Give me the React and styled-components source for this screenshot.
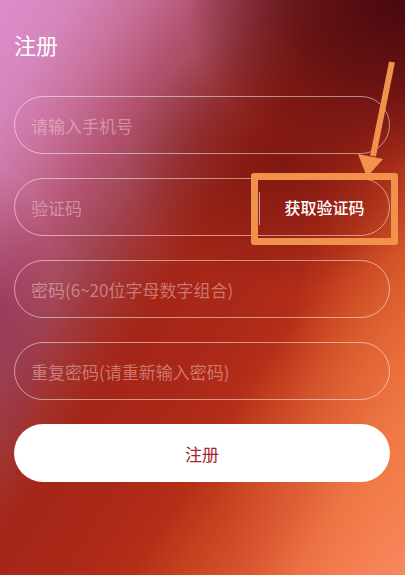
import React from "react";
import styled, { createGlobalStyle } from "styled-components";

const Global = createGlobalStyle`
  html, body { margin: 0; padding: 0; }
  body { font-family: "Noto Sans CJK SC", "Noto Sans", sans-serif; }
  * { box-sizing: border-box; }
`;

const Page = styled.div`
  position: relative;
  width: 405px;
  height: 575px;
  overflow: hidden;
  padding: 28px 15px 0 14px;
  background:
    radial-gradient(ellipse 220px 170px at 405px 0px, rgba(72,8,14,1) 0%, rgba(80,10,16,0.7) 50%, rgba(90,12,16,0) 100%),
    radial-gradient(ellipse 160px 130px at 285px 160px, rgba(100,14,12,0.6) 0%, rgba(100,14,12,0) 100%),
    radial-gradient(ellipse 55px 140px at 0px 310px, rgba(130,30,70,0.45) 0%, rgba(130,30,70,0) 100%),
    radial-gradient(ellipse 130px 250px at 420px 360px, rgba(240,122,60,0.5) 0%, rgba(240,122,60,0) 100%),
    radial-gradient(ellipse 200px 200px at 420px 470px, rgba(244,130,80,0.5) 0%, rgba(244,130,80,0) 100%),
    linear-gradient(123deg,
      #de8ccb 0px, #d686bc 60px, #c8709a 115px, #b25270 170px, #a44858 205px,
      #a03a40 235px, #a2302a 262px, #a42618 295px, #aa2818 360px, #b42e18 420px,
      #c84420 470px, #d85630 520px, #ea6e40 560px, #f47c52 600px, #fa8c68 653px);
`;

const Title = styled.h1`
  margin: 0 0 35px;
  font-size: 22px;
  font-weight: 400;
  line-height: 33px;
  color: #ffffff;
`;

const Form = styled.div`
  display: flex;
  flex-direction: column;
  gap: 24px;
`;

const Field = styled.div`
  position: relative;
  display: flex;
  align-items: center;
  height: 58px;
  border: 1px solid rgba(255, 255, 255, 0.5);
  border-radius: 29px;
`;

const Input = styled.input`
  flex: 1;
  min-width: 0;
  height: 100%;
  padding: 0 0 0 16px;
  border: none;
  outline: none;
  background: transparent;
  font-family: inherit;
  font-size: 17px;
  color: #fff;
  &::placeholder {
    color: rgba(255, 218, 218, 0.45);
  }
`;

const Divider = styled.span`
  width: 1px;
  height: 33px;
  margin-top: 2px;
  background: rgba(255, 255, 255, 0.6);
`;

const CodeButton = styled.button`
  width: 129px;
  height: 100%;
  border: none;
  background: transparent;
  font-family: inherit;
  font-size: 16px;
  font-weight: 500;
  color: #fff;
  padding: 0;
`;

const Submit = styled.button`
  height: 58px;
  border: none;
  border-radius: 29px;
  background: #fff;
  font-family: inherit;
  font-size: 17px;
  color: #a3262c;
`;

const Highlight = styled.div`
  position: absolute;
  left: 236px;
  top: -6px;
  width: 147px;
  height: 72px;
  border: 7px solid #f0924c;
  border-radius: 3px;
  pointer-events: none;
`;

const Arrow = styled.svg`
  position: absolute;
  left: 0;
  top: 0;
  pointer-events: none;
`;

export default function App() {
  return (
    <>
      <Global />
      <Page>
        <Title>注册</Title>
        <Form>
          <Field>
            <Input placeholder="请输入手机号" />
          </Field>
          <Field>
            <Input placeholder="验证码" />
            <Divider />
            <CodeButton>获取验证码</CodeButton>
            <Highlight />
          </Field>
          <Field>
            <Input placeholder="密码(6~20位字母数字组合)" />
          </Field>
          <Field>
            <Input placeholder="重复密码(请重新输入密码)" />
          </Field>
          <Submit>注册</Submit>
        </Form>
        <Arrow width="405" height="575" viewBox="0 0 405 575">
          <line x1="392" y1="62" x2="373" y2="156" stroke="#f0924c" strokeWidth="6" />
          <polygon points="358,154 383,159 367,177" fill="#f0924c" />
        </Arrow>
      </Page>
    </>
  );
}
